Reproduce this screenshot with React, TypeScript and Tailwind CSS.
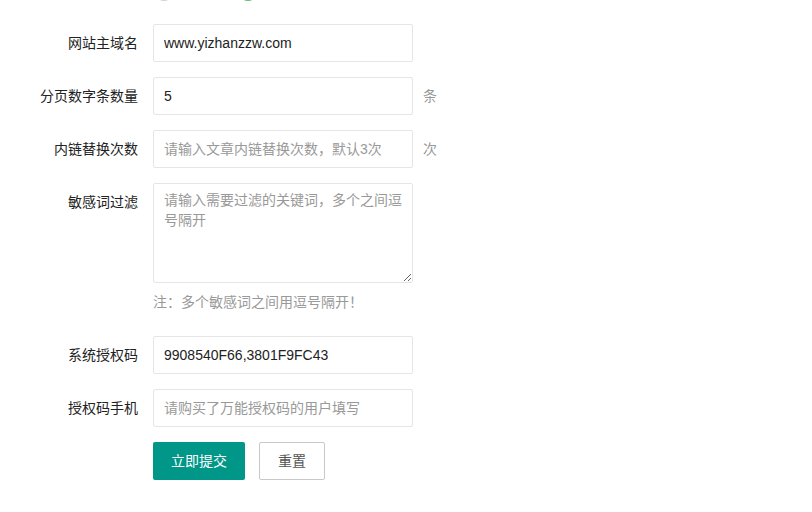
const font = "font-['Liberation_Sans','Noto_Sans_CJK_SC',sans-serif]";

function Row({ label, children, suffix }: { label: string; children: React.ReactNode; suffix?: string }) {
  return (
    <div className="flex items-start mb-[15px]">
      <label className="w-[153px] shrink-0 pr-[15px] py-[9px] text-right leading-[20px] text-[#222]">{label}</label>
      {children}
      {suffix && <div className="py-[9px] pl-[10px] leading-[20px] text-[#999]">{suffix}</div>}
    </div>
  );
}

const inputCls =
  "w-[260px] h-[38px] rounded-[2px] border border-[#e6e6e6] bg-white px-[10px] text-[14px] text-[#222] outline-none placeholder:text-[#999]";

export default function App() {
  return (
    <div className={`${font} min-h-screen bg-white text-[14px]`}>
      {/* bottoms of the radio icons from the row above */}
      <div className="relative h-[24px] overflow-hidden">
        <span className="absolute left-[155px] top-[-17px] h-[18px] w-[18px] rounded-full border-2 border-[#d2d2d2]" />
        <span className="absolute left-[239px] top-[-17px] h-[18px] w-[18px] rounded-full border-2 border-[#5FB878]" />
      </div>

      <Row label="网站主域名">
        <input className={inputCls} defaultValue="www.yizhanzzw.com" />
      </Row>
      <Row label="分页数字条数量" suffix="条">
        <input className={inputCls} defaultValue="5" />
      </Row>
      <Row label="内链替换次数" suffix="次">
        <input className={inputCls} placeholder="请输入文章内链替换次数，默认3次" />
      </Row>
      <div className="flex items-start">
        <label className="w-[153px] shrink-0 pr-[15px] py-[9px] text-right leading-[20px] text-[#222]">敏感词过滤</label>
        <div>
          <textarea
            className="block w-[260px] h-[100px] rounded-[2px] border border-[#e6e6e6] bg-white px-[10px] py-[6px] leading-[20px] text-[14px] text-[#222] outline-none placeholder:text-[#999]"
            placeholder="请输入需要过滤的关键词，多个之间逗号隔开"
          />
          <div className="py-[9px] leading-[20px] text-[#999]">注：多个敏感词之间用逗号隔开！</div>
        </div>
      </div>
      <div className="h-[15px]" />
      <Row label="系统授权码">
        <input className={inputCls} defaultValue="9908540F66,3801F9FC43" />
      </Row>
      <Row label="授权码手机">
        <input className={inputCls} placeholder="请购买了万能授权码的用户填写" />
      </Row>
      <div className="flex gap-[14px] pl-[153px]">
        <button className="h-[38px] rounded-[2px] bg-[#009688] px-[18px] text-[14px] text-white">立即提交</button>
        <button className="h-[38px] rounded-[2px] border border-[#C9C9C9] bg-white px-[18px] text-[14px] text-[#555]">重置</button>
      </div>
    </div>
  );
}
